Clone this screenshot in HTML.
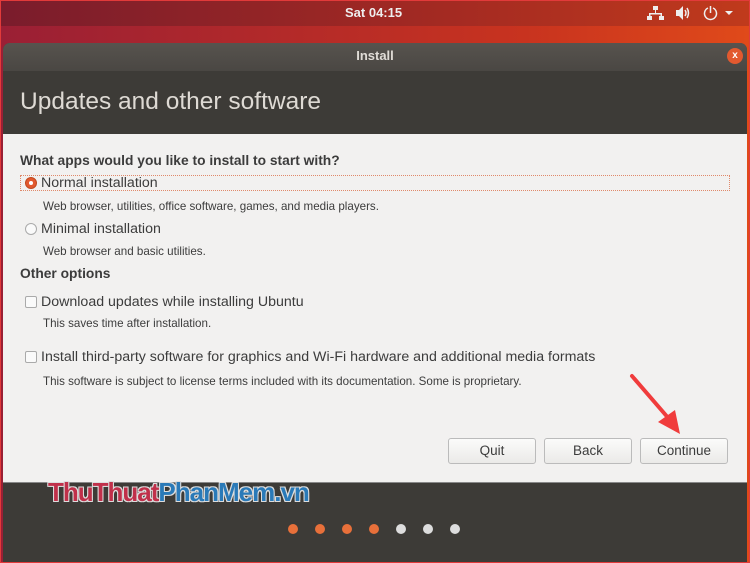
<!DOCTYPE html>
<html><head><meta charset="utf-8"><style>
*{margin:0;padding:0;box-sizing:border-box}
body{width:750px;height:563px;overflow:hidden;font-family:"Liberation Sans",sans-serif;position:relative;background:linear-gradient(90deg,#9a1f35,#c8331f 70%,#e04a1a)}
.top{position:absolute;left:0;top:0;width:750px;height:26px;background:linear-gradient(90deg,#7a1c2c,#a42a22 60%,#c03a1c);color:#eee;font-size:13px;font-weight:bold}
.win{position:absolute;left:3px;top:43px;width:744px;height:520px;border-radius:7px 7px 0 0;overflow:hidden;background:#3d3b37}
.tb{height:28px;background:linear-gradient(#57534e,#4a4743);text-align:center;color:#e0dcd6;font-size:13px;font-weight:bold;line-height:26px;position:relative}
.hd{height:63px;background:#3d3b37;color:#dedad4;font-size:24.5px;padding:17px 0 0 17px}
.ct{position:absolute;left:0;top:91px;width:744px;height:349px;background:#f2f1f0;border-bottom:1px solid #888;color:#3c3c3c}
.t{position:absolute;font-size:14.2px;white-space:nowrap}
.s{position:absolute;font-size:11.6px;white-space:nowrap;color:#3c3c3c}
.b{font-weight:bold}
.rd{position:absolute;width:12px;height:12px;border-radius:50%;border:1px solid #aaa;background:#fafafa}
.cb{position:absolute;width:12px;height:12px;border-radius:2px;border:1px solid #aaa;background:#fafafa}
.btn{position:absolute;top:304px;width:88px;height:26px;border:1px solid #bbb;border-radius:3px;background:linear-gradient(#fbfbfa,#ebeae8);font-size:13.5px;text-align:center;line-height:24px;color:#3c3c3c}
.dot{position:absolute;top:524px;width:10px;height:10px;border-radius:50%}
</style></head><body>
<div class="top"><div style="position:absolute;left:345px;top:5px">Sat 04:15</div>
<svg style="position:absolute;left:647px;top:5px" width="90" height="16"><g fill="#eee"><rect x="6" y="1" width="5" height="4"/><rect x="8" y="5" width="1" height="4"/><rect x="2" y="8" width="13" height="1.5"/><rect x="2" y="8" width="1.5" height="3"/><rect x="13.5" y="8" width="1.5" height="3"/><rect x="0" y="11" width="5" height="4"/><rect x="12" y="11" width="5" height="4"/><path d="M29 5h3l4-4v14l-4-4h-3z"/></g><g stroke="#eee" fill="none" stroke-width="1.5"><path d="M38 5q2 3 0 6M40 3q3 5 0 10"/><path d="M61 3a6 6 0 1 0 5 0"/><path d="M63.5 1v7"/></g><path d="M78 6h8l-4 4z" fill="#eee"/></svg></div>
<div class="win">
<div class="tb">Install<div style="position:absolute;right:4px;top:5px;width:16px;height:16px;border-radius:50%;background:#e2592f;color:#fff;font-size:10px;line-height:16px">x</div></div>
<div class="hd">Updates and other software</div>
<div class="ct">
<div class="t b" style="left:17px;top:19px;color:#3c3c3c;font-size:13.8px">What apps would you like to install to start with?</div>
<div style="position:absolute;left:17px;top:41px;width:710px;height:16px;border:1px dotted #e0896a"></div>
<div class="rd" style="left:22px;top:43px;border-color:#c04a20;background:#e2592f"><div style="position:absolute;left:3px;top:3px;width:4px;height:4px;border-radius:50%;background:#fff"></div></div>
<div class="t" style="left:38px;top:41px">Normal installation</div>
<div class="s" style="left:40px;top:66px">Web browser, utilities, office software, games, and media players.</div>
<div class="rd" style="left:22px;top:89px"></div>
<div class="t" style="left:38px;top:87px">Minimal installation</div>
<div class="s" style="left:40px;top:111px">Web browser and basic utilities.</div>
<div class="t b" style="left:17px;top:132px;font-size:13.8px">Other options</div>
<div class="cb" style="left:22px;top:162px"></div>
<div class="t" style="left:38px;top:160px">Download updates while installing Ubuntu</div>
<div class="s" style="left:40px;top:183px">This saves time after installation.</div>
<div class="cb" style="left:22px;top:217px"></div>
<div class="t" style="left:38px;top:215px">Install third-party software for graphics and Wi-Fi hardware and additional media formats</div>
<div class="s" style="left:40px;top:241px">This software is subject to license terms included with its documentation. Some is proprietary.</div>
<div class="btn" style="left:445px">Quit</div>
<div class="btn" style="left:541px">Back</div>
<div class="btn" style="left:637px">Continue</div>
<svg style="position:absolute;left:617px;top:236px" width="80" height="70"><path d="M12 6L50 50" stroke="#f03c3c" stroke-width="4" stroke-linecap="round"/><path d="M38 52L60 64L55 40z" fill="#f03c3c"/></svg>
</div>
<div style="position:absolute;left:45px;top:434px;font-size:26px;font-weight:bold;letter-spacing:-1px;color:#c0304a;text-shadow:1px 1px 0 #ddd,-1px -1px 0 #ddd,1px -1px 0 #ddd,-1px 1px 0 #ddd">ThuThuat<span style="color:#2a7ab8">PhanMem.vn</span></div>
</div>
<div class="dot" style="left:288px;background:#e8703a"></div>
<div class="dot" style="left:315px;background:#e8703a"></div>
<div class="dot" style="left:342px;background:#e8703a"></div>
<div class="dot" style="left:369px;background:#e8703a"></div>
<div class="dot" style="left:396px;background:#ddd"></div>
<div class="dot" style="left:423px;background:#ddd"></div>
<div class="dot" style="left:450px;background:#ddd"></div>
<div style="position:absolute;left:0;top:0;width:750px;height:563px;border:1px solid #e23a3a"></div>
</body></html>
